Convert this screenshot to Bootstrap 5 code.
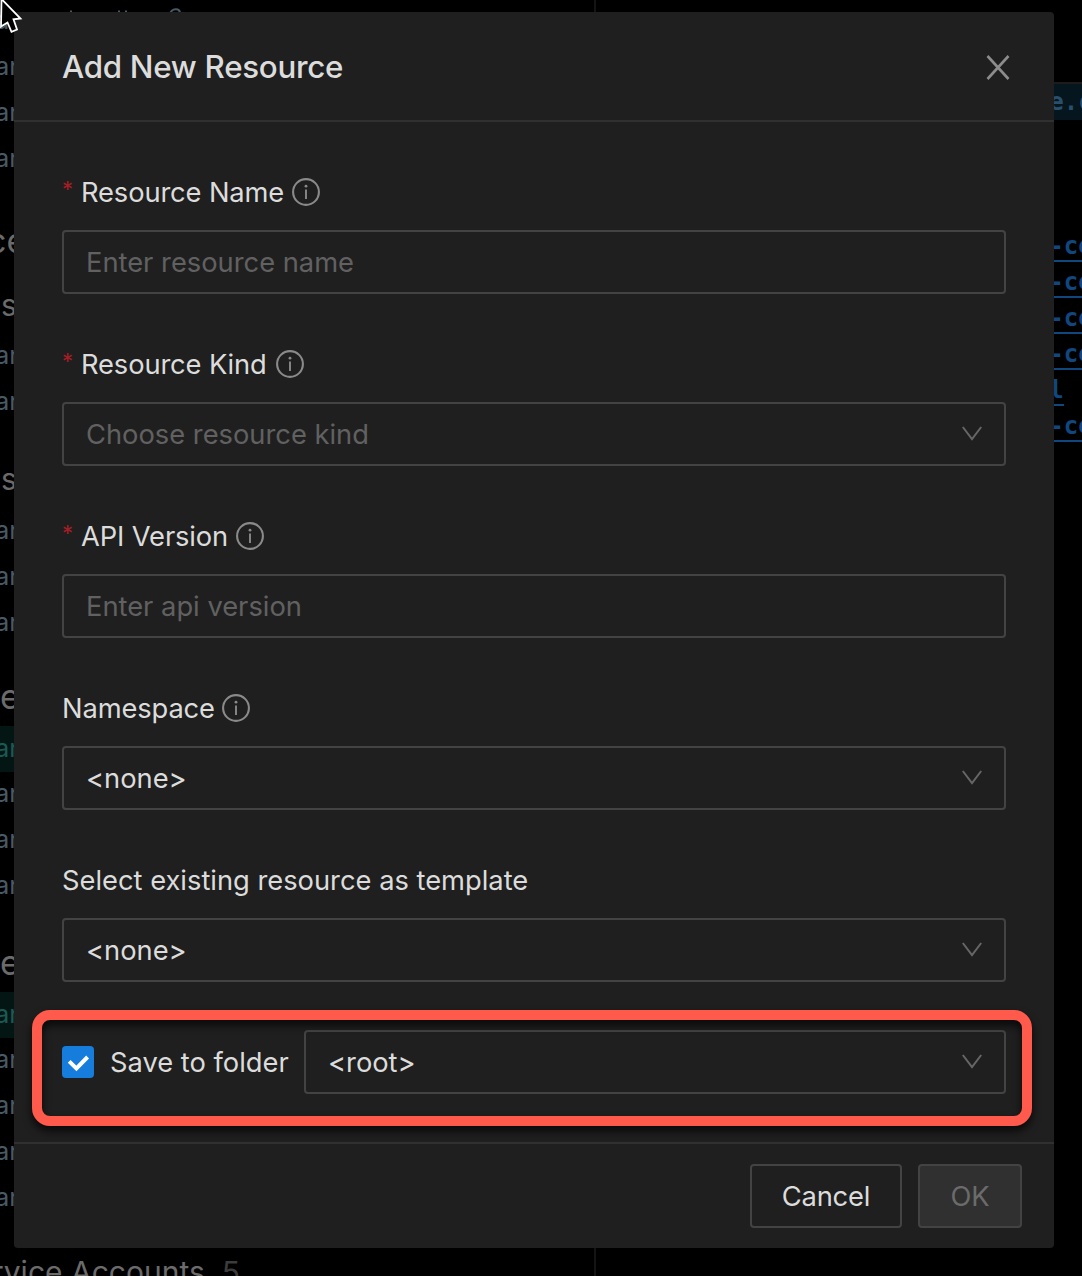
<!DOCTYPE html>
<html lang="en" data-bs-theme="dark">
<head>
<meta charset="utf-8">
<meta name="viewport" content="width=device-width, initial-scale=1">
<title>Add New Resource</title>
<link href="https://cdn.jsdelivr.net/npm/bootstrap@5.3.0/dist/css/bootstrap.min.css" rel="stylesheet">
<style>
  body { width: 1082px; height: 1276px; background: #000; font-family: Inter, "Liberation Sans", sans-serif; font-size: 27.3px; color: #dcdcdc; }
  .workspace { height: 1276px; }

  /* dimmed navigator */
  .navigator { width: 596px; border-right: 2px solid #141414; }
  .nav-list { margin-top: -1px; }
  .res { height: 46px; line-height: 42px; font-size: 25.5px; color: #475a66; text-indent: -5px; white-space: nowrap; }
  .res-on { background: #041614; color: #1a5a55; line-height: 44px; }
  .res-marks { margin-left: -9px; }
  .sect { height: 62px; line-height: 65px; font-size: 34px; color: #6b6b6b; white-space: nowrap; }
  .kind { height: 48px; line-height: 48px; font-size: 30px; color: #6b6b6b; text-indent: 1px; }
  .sect-first { margin-top: 27px; line-height: 61px; text-indent: -13px; }
  .gap-a { margin-top: 9px; } .gap-b { margin-top: 5px; } .gap-c { margin-top: 29px; }
  .gap-d { margin-top: 6px; } .gap-e { margin-top: 17px; } .gap-f { margin-top: 20px; } .gap-g { margin-top: 26px; }
  .accounts { margin-left: -9px; }
  .count { color: #3c3c3c; margin-left: 16px; }

  /* dimmed editor */
  .editor { padding-top: 82px; font-family: "DejaVu Sans Mono", monospace; font-size: 24px; font-weight: 700; color: #10477f; white-space: nowrap; }
  .code { height: 36px; line-height: 37px; padding-left: 453.3px; }
  .code-on { border-top: 2px solid #1c1c1c; height: 38px; background: #06161f; color: #284f6b; margin-bottom: 108px; }
  .code span { display: inline-block; height: 34px; }
  .code .lnk { border-bottom: 2px solid #10477f; height: 34px; }

  /* dialog */
  .dlg { left: 14px; top: 12px; width: 1040px; height: 1236px; background: #1f1f1f; border: 0; border-radius: 4px; color: #dcdcdc; }
  .dlg .modal-header { height: 110px; padding: 2px 40px 0 48px; border-bottom: 2px solid #303030; }
  .dlg .modal-title { font-size: 31.3px; font-weight: 500; line-height: 44px; letter-spacing: -.28px; color: #dcdcdc; }
  .dlg .modal-body { padding: 48px; }
  .dlg .modal-footer { height: 106px; padding: 0 32px; gap: 16px; border-top: 2px solid #303030; }
  .field { margin-bottom: 48px; }
  .field-label { height: 44px; margin-bottom: 16px; line-height: 45px; white-space: nowrap; }
  .field-label .tight { letter-spacing: -.12px; }
  .req { width: 19px; height: 50px; color: #a61d24; font-size: 22px; }
  .info { width: 28px; height: 28px; margin-left: 8px; }
  .info-kind { margin-left: 9px; }
  .info-ns { margin-left: 7px; }
  .box { height: 64px; padding: 1px 22px 0; font-size: 27.3px; line-height: 59px; background: transparent; border: 2px solid #434343; border-radius: 4px; color: #dcdcdc; }
  .box svg { margin-bottom: 2px; }
  .box::placeholder, .hint { color: #616161; opacity: 1; }
  .check { width: 32px; height: 32px; background: #177ddc; border-radius: 4px; margin-right: 16px; }
  .folder-text { padding-top: 2px; }
  .folder-box { width: 702px; }
  .act { height: 64px; margin: 0; padding: 1px 0 0; font-size: 27.3px; line-height: 59px; letter-spacing: -.2px; border: 2px solid #434343; border-radius: 4px; color: #dcdcdc; }
  .act-cancel { width: 152px; }
  .act-ok, .act-ok:disabled { width: 104px; background: #303030; border-color: #434343; color: #6b6b6b; opacity: 1; }
  .callout { left: 32px; top: 1010px; width: 1000px; height: 116px; border: 10px solid #ff5a4b; border-radius: 18px; filter: drop-shadow(0 5px 4px rgba(0,0,0,.75)); }
  .pointer { left: 0; top: 0; width: 24px; height: 36px; }
</style>
</head>
<body class="m-0 overflow-hidden position-relative">
<div class="workspace d-flex overflow-hidden">
  <aside class="navigator flex-shrink-0 overflow-hidden">
    <div class="nav-list">
      <div class="res d-flex"><span>ar</span>
        <svg class="res-marks" width="200" height="20" viewBox="0 0 200 20" fill="none" stroke="#475a66" stroke-width="2"><path d="M61 11.500v4M109 11.500v4M116 11.500v4M160 14.500c2-5 9-6 10-1"/></svg>
      </div>
      <div class="res">ar</div>
      <div class="res">ar</div>
      <div class="res">ar</div>
      <div class="sect sect-first">ce</div>
      <div class="kind gap-a">s</div>
      <div class="res gap-b">ar</div>
      <div class="res">ar</div>
      <div class="kind gap-c">s</div>
      <div class="res gap-d">ar</div>
      <div class="res">ar</div>
      <div class="res">ar</div>
      <div class="sect gap-e">e</div>
      <div class="res res-on">ar</div>
      <div class="res">ar</div>
      <div class="res">ar</div>
      <div class="res">ar</div>
      <div class="sect gap-f">e</div>
      <div class="res res-on">ar</div>
      <div class="res">ar</div>
      <div class="res">ar</div>
      <div class="res">ar</div>
      <div class="res">ar</div>
      <div class="kind gap-g d-flex"><span class="accounts">rvice Accounts</span><span class="count">5</span></div>
    </div>
  </aside>
  <main class="editor flex-grow-1 overflow-hidden">
    <div class="code code-on"><span>e.c</span></div>
    <div class="code"><span class="lnk">-co</span></div>
    <div class="code"><span class="lnk">-co</span></div>
    <div class="code"><span class="lnk">-co</span></div>
    <div class="code"><span class="lnk">-co</span></div>
    <div class="code"><span class="lnk">l</span></div>
    <div class="code"><span class="lnk">-co</span></div>
  </main>
</div>

<div class="dlg modal-content position-absolute" role="dialog">
  <div class="modal-header d-flex justify-content-between align-items-center">
    <h1 class="modal-title">Add New Resource</h1>
    <svg width="32" height="32" viewBox="0 0 32 32" fill="none" stroke="#8c8c8c" stroke-width="2.6"><path d="M5.500 5 26.500 28M26.500 5 5.500 28"/></svg>
  </div>
  <div class="modal-body">
    <div class="field">
      <label class="field-label d-flex align-items-center"><span class="req">*</span><span class="tight">Resource Name</span>
        <svg class="info" viewBox="0 0 28 28"><circle cx="14" cy="14" r="12.9" fill="none" stroke="#8a8a8a" stroke-width="2.1"/><path d="M14 11.6v9.4" stroke="#8a8a8a" stroke-width="1.9"/><circle cx="14" cy="8.2" r="1.4" fill="#8a8a8a"/></svg></label>
      <input class="form-control box" placeholder="Enter resource name">
    </div>
    <div class="field">
      <label class="field-label d-flex align-items-center"><span class="req">*</span><span class="tight">Resource Kind</span>
        <svg class="info info-kind" viewBox="0 0 28 28"><circle cx="14" cy="14" r="12.9" fill="none" stroke="#8a8a8a" stroke-width="2.1"/><path d="M14 11.6v9.4" stroke="#8a8a8a" stroke-width="1.9"/><circle cx="14" cy="8.2" r="1.4" fill="#8a8a8a"/></svg></label>
      <div class="box d-flex justify-content-between align-items-center"><span class="hint">Choose resource kind</span>
        <svg width="20" height="16" viewBox="0 0 20 16" fill="none" stroke="#666" stroke-width="2"><path d="M.8 1 10 13 19.2 1"/></svg></div>
    </div>
    <div class="field">
      <label class="field-label d-flex align-items-center"><span class="req">*</span><span class="tight">API Version</span>
        <svg class="info" viewBox="0 0 28 28"><circle cx="14" cy="14" r="12.9" fill="none" stroke="#8a8a8a" stroke-width="2.1"/><path d="M14 11.6v9.4" stroke="#8a8a8a" stroke-width="1.9"/><circle cx="14" cy="8.2" r="1.4" fill="#8a8a8a"/></svg></label>
      <input class="form-control box" placeholder="Enter api version">
    </div>
    <div class="field">
      <label class="field-label d-flex align-items-center"><span class="tight">Namespace</span>
        <svg class="info info-ns" viewBox="0 0 28 28"><circle cx="14" cy="14" r="12.9" fill="none" stroke="#8a8a8a" stroke-width="2.1"/><path d="M14 11.6v9.4" stroke="#8a8a8a" stroke-width="1.9"/><circle cx="14" cy="8.2" r="1.4" fill="#8a8a8a"/></svg></label>
      <div class="box d-flex justify-content-between align-items-center"><span>&lt;none&gt;</span>
        <svg width="20" height="16" viewBox="0 0 20 16" fill="none" stroke="#666" stroke-width="2"><path d="M.8 1 10 13 19.2 1"/></svg></div>
    </div>
    <div class="field">
      <label class="field-label d-flex align-items-center"><span>Select existing resource as template</span></label>
      <div class="box d-flex justify-content-between align-items-center"><span>&lt;none&gt;</span>
        <svg width="20" height="16" viewBox="0 0 20 16" fill="none" stroke="#666" stroke-width="2"><path d="M.8 1 10 13 19.2 1"/></svg></div>
    </div>
    <div class="d-flex align-items-center">
      <svg class="check flex-shrink-0" viewBox="0 0 32 32" fill="none" stroke="#fff" stroke-width="4"><path d="M7.2 15.4 14.4 22.4 25.6 11"/></svg>
      <span class="text-nowrap folder-text">Save to folder</span>
      <div class="box folder-box flex-shrink-0 ms-auto d-flex justify-content-between align-items-center"><span>&lt;root&gt;</span>
        <svg width="20" height="16" viewBox="0 0 20 16" fill="none" stroke="#666" stroke-width="2"><path d="M.8 1 10 13 19.2 1"/></svg></div>
    </div>
  </div>
  <div class="modal-footer d-flex justify-content-end align-items-center">
    <button class="btn act act-cancel" type="button">Cancel</button>
    <button class="btn act act-ok" type="button" disabled>OK</button>
  </div>
</div>

<div class="callout position-absolute"></div>
<svg class="pointer position-absolute" viewBox="0 0 24 36"><path d="M1.500-1 20.500 18.500 13.500 19.300 17 29.500 11.500 31.800 7.500 22.500 1 26.500Z" fill="#000" stroke="#fff" stroke-width="1.8"/></svg>
<script src="https://cdn.jsdelivr.net/npm/bootstrap@5.3.0/dist/js/bootstrap.bundle.min.js"></script>
</body>
</html>
